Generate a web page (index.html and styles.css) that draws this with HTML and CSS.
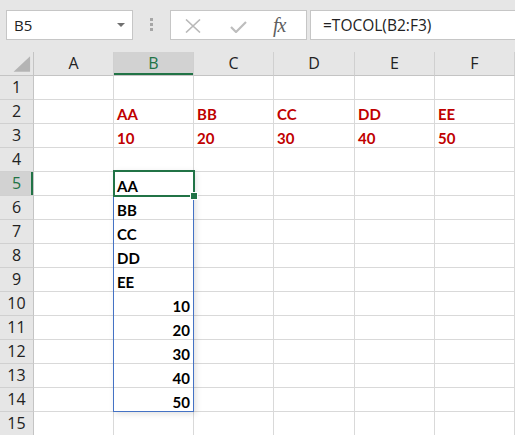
FILE: index.html
```html
<!DOCTYPE html>
<html>
<head>
<meta charset="utf-8">
<link rel="stylesheet" href="styles.css">
</head>
<body>
<div class="toolbar">
  <div class="namebox">
    <span class="nb-text">B5</span>
    <svg class="nb-arrow" width="8" height="5" viewBox="0 0 8 5"><polygon points="0,0 8,0 4,4" fill="#707070"/></svg>
  </div>
  <div class="dots"><i></i><i></i><i></i></div>
  <div class="fxbox">
    <svg class="ic-x" width="16" height="14" viewBox="0 0 16 14"><path d="M1 0.5 L15 13.5 M15 0.5 L1 13.5" stroke="#b9b9b9" stroke-width="1.6" fill="none"/></svg>
    <svg class="ic-check" width="17" height="12" viewBox="0 0 17 12"><path d="M1 6 L6 11 L16 1" stroke="#bdbdbd" stroke-width="2.2" fill="none"/></svg>
    <span class="fx">fx</span>
  </div>
  <div class="formula">=TOCOL(B2:F3)</div>
</div>
<div class="sheet">
  <div class="hd corner"><svg width="34" height="24" viewBox="0 0 34 24"><polygon points="14,20 31,20 31,4" fill="#b4b4b4"/></svg></div>
  <div class="hd col">A</div>
  <div class="hd col sel-col">B</div>
  <div class="hd col">C</div>
  <div class="hd col">D</div>
  <div class="hd col">E</div>
  <div class="hd col">F</div>

  <div class="hd row">1</div><div class="c"></div><div class="c"></div><div class="c"></div><div class="c"></div><div class="c"></div><div class="c"></div>
  <div class="hd row">2</div><div class="c"></div><div class="c red">AA</div><div class="c red">BB</div><div class="c red">CC</div><div class="c red">DD</div><div class="c red">EE</div>
  <div class="hd row">3</div><div class="c"></div><div class="c red">10</div><div class="c red">20</div><div class="c red">30</div><div class="c red">40</div><div class="c red">50</div>
  <div class="hd row">4</div><div class="c"></div><div class="c"></div><div class="c"></div><div class="c"></div><div class="c"></div><div class="c"></div>
  <div class="hd row sel-row">5</div><div class="c"></div><div class="c blk">AA</div><div class="c"></div><div class="c"></div><div class="c"></div><div class="c"></div>
  <div class="hd row">6</div><div class="c"></div><div class="c blk">BB</div><div class="c"></div><div class="c"></div><div class="c"></div><div class="c"></div>
  <div class="hd row">7</div><div class="c"></div><div class="c blk">CC</div><div class="c"></div><div class="c"></div><div class="c"></div><div class="c"></div>
  <div class="hd row">8</div><div class="c"></div><div class="c blk">DD</div><div class="c"></div><div class="c"></div><div class="c"></div><div class="c"></div>
  <div class="hd row">9</div><div class="c"></div><div class="c blk">EE</div><div class="c"></div><div class="c"></div><div class="c"></div><div class="c"></div>
  <div class="hd row">10</div><div class="c"></div><div class="c blk num">10</div><div class="c"></div><div class="c"></div><div class="c"></div><div class="c"></div>
  <div class="hd row">11</div><div class="c"></div><div class="c blk num">20</div><div class="c"></div><div class="c"></div><div class="c"></div><div class="c"></div>
  <div class="hd row">12</div><div class="c"></div><div class="c blk num">30</div><div class="c"></div><div class="c"></div><div class="c"></div><div class="c"></div>
  <div class="hd row">13</div><div class="c"></div><div class="c blk num">40</div><div class="c"></div><div class="c"></div><div class="c"></div><div class="c"></div>
  <div class="hd row">14</div><div class="c"></div><div class="c blk num">50</div><div class="c"></div><div class="c"></div><div class="c"></div><div class="c"></div>
  <div class="hd row">15</div><div class="c"></div><div class="c"></div><div class="c"></div><div class="c"></div><div class="c"></div><div class="c"></div>

  <div class="spill"></div>
  <div class="active"></div>
  <div class="handle"></div>
</div>
</body>
</html>
```
FILE: styles.css
```css
html, body {
  margin: 0;
  padding: 0;
}
body {
  width: 515px;
  height: 435px;
  overflow: hidden;
  background: #ffffff;
  font-family: "Open Sans", "Noto Sans", sans-serif;
}
.toolbar {
  height: 52px;
  box-sizing: border-box;
  background: #e6e6e6;
  display: flex;
  align-items: flex-start;
  padding-top: 10px;
  overflow: hidden;
}
.namebox {
  margin-left: 6px;
  width: 127px;
  height: 30px;
  box-sizing: border-box;
  background: #fff;
  border: 1px solid #c6c6c6;
  display: flex;
  align-items: center;
  justify-content: space-between;
  padding: 0 7px 0 7px;
  font-size: 15px;
  color: #222;
}
.nb-text {
  line-height: 28px;
}
.nb-arrow {
  display: block;
  margin-top: 1px;
}
.dots {
  width: 37px;
  display: flex;
  flex-direction: column;
  align-items: center;
  gap: 2px;
  padding-top: 8px;
}
.dots i {
  display: block;
  width: 3px;
  height: 3px;
  background: #a6a6a6;
}
.fxbox {
  width: 137px;
  height: 30px;
  box-sizing: border-box;
  background: #fff;
  border: 1px solid #c6c6c6;
  display: flex;
  align-items: center;
  position: relative;
}
.ic-x {
  display: block;
  margin-left: 14px;
  margin-top: 2px;
}
.ic-check {
  display: block;
  margin-left: 29px;
  margin-top: 3px;
}
.fx {
  margin-left: 26px;
  font-family: "Liberation Serif", "DejaVu Serif", serif;
  font-style: italic;
  font-size: 20px;
  color: #5f5f5f;
  letter-spacing: -1px;
  line-height: 28px;
}
.formula {
  margin-left: 3px;
  flex: 1;
  height: 30px;
  box-sizing: border-box;
  background: #fff;
  border: 1px solid #c6c6c6;
  border-right: none;
  padding-left: 12px;
  font-size: 15.5px;
  color: #222;
  line-height: 28px;
}
.sheet {
  position: relative;
  display: grid;
  grid-template-columns: 34px 80px 80px 80px 81px 80px 80px;
  grid-auto-rows: 24px;
}
.hd {
  background: #e6e6e6;
  box-sizing: border-box;
  border-right: 1px solid #c4c4c4;
  border-bottom: 1px solid #c4c4c4;
  color: #222;
  font-size: 16px;
  display: flex;
  align-items: center;
  justify-content: center;
  line-height: 23px;
}
.corner svg {
  display: block;
}
.col {
  border-right-color: #d0d0d0;
}
.row {
  border-bottom-color: #d0d0d0;
}
.sel-col {
  background: #d2d2d2;
  color: #217346;
  box-shadow: inset 0 -2px 0 #217346;
}
.sel-row {
  background: #d2d2d2;
  color: #217346;
  box-shadow: inset -2px 0 0 #217346;
}
.c {
  box-sizing: border-box;
  border-right: 1px solid #d9d9d9;
  border-bottom: 1px solid #d9d9d9;
  font-family: "Lato", "Liberation Sans", sans-serif;
  font-weight: 700;
  font-size: 15px;
  line-height: 20px;
  padding: 4px 3px 0 3px;
  white-space: nowrap;
}
.red {
  color: #c00000;
}
.blk {
  color: #000;
}
.num {
  text-align: right;
}
.spill {
  position: absolute;
  left: 113px;
  top: 118px;
  width: 81px;
  height: 242px;
  box-sizing: border-box;
  border: 1px solid #4472c4;
  box-shadow: 2px 2px 6px rgba(0, 0, 0, 0.12);
}
.active {
  position: absolute;
  left: 113px;
  top: 118px;
  width: 82px;
  height: 27px;
  box-sizing: border-box;
  border: 2px solid #217346;
}
.handle {
  position: absolute;
  left: 190px;
  top: 140px;
  width: 6px;
  height: 6px;
  background: #217346;
  border: 1px solid #fff;
}
```
